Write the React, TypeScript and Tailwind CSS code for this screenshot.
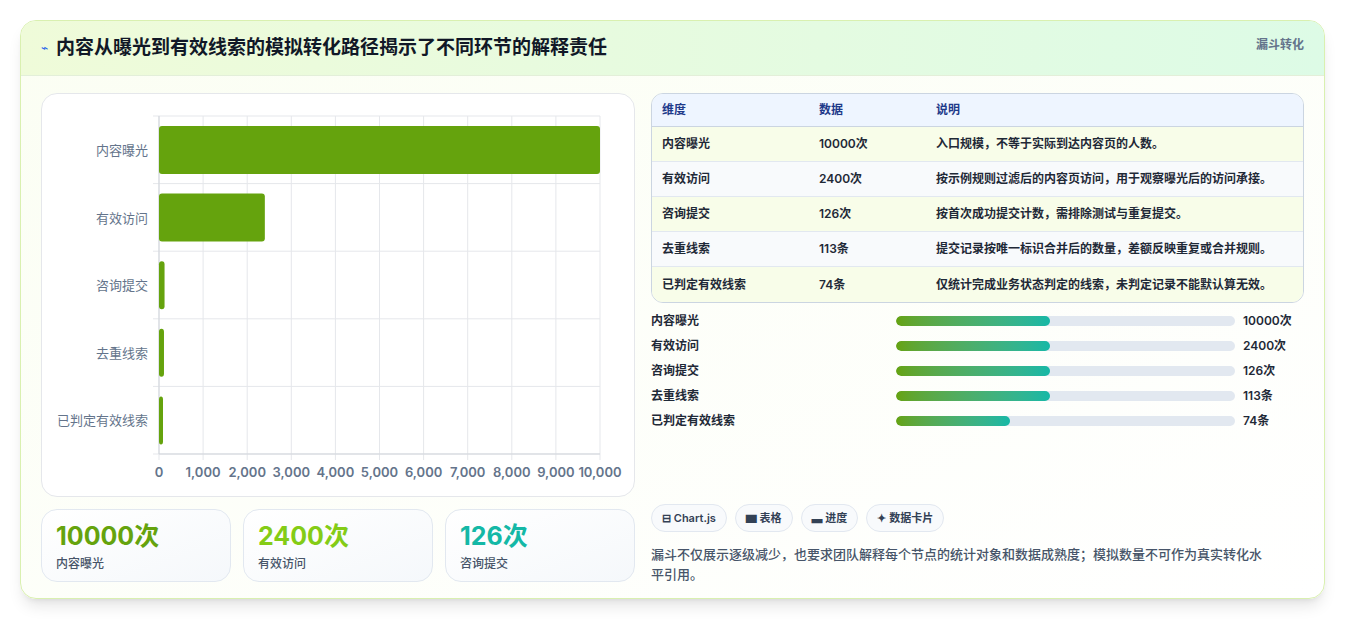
import React from "react";

const rows = [
  ["内容曝光", "10000次", "入口规模，不等于实际到达内容页的人数。", 10000],
  ["有效访问", "2400次", "按示例规则过滤后的内容页访问，用于观察曝光后的访问承接。", 2400],
  ["咨询提交", "126次", "按首次成功提交计数，需排除测试与重复提交。", 126],
  ["去重线索", "113条", "提交记录按唯一标识合并后的数量，差额反映重复或合并规则。", 113],
  ["已判定有效线索", "74条", "仅统计完成业务状态判定的线索，未判定记录不能默认算无效。", 74],
] as const;
const prog = [154, 154, 154, 154, 114];
const ticks = ["0", "1,000", "2,000", "3,000", "4,000", "5,000", "6,000", "7,000", "8,000", "9,000", "10,000"];

function Chart() {
  const x0 = 117, x1 = 558, top = 22, bottom = 360;
  const rh = (bottom - top) / 5;
  return (
    <svg width="593" height="403" className="block">
      {ticks.map((t, i) => {
        const x = x0 + ((x1 - x0) * i) / 10;
        return (
          <g key={i}>
            <line x1={x} x2={x} y1={top} y2={bottom + 6} stroke="#e5e7eb" />
            <text x={x} y={383} textAnchor="middle" fontSize="13" fill="#64748b" fontWeight="600">{t}</text>
          </g>
        );
      })}
      {[0, 1, 2, 3, 4, 5].map((i) => (
        <line key={i} x1={x0 - 6} x2={x1} y1={top + rh * i} y2={top + rh * i} stroke="#e5e7eb" />
      ))}
      <line x1={x0} x2={x0} y1={top} y2={bottom} stroke="#d1d5db" />
      <line x1={x0} x2={x1} y1={bottom} y2={bottom} stroke="#d1d5db" />
      {rows.map((r, i) => {
        const y = top + rh * i + 10;
        const w = Math.max(((x1 - x0) * (r[3] as number)) / 10000, 4);
        return (
          <g key={i}>
            <rect x={x0} y={y} width={w} height={48} rx="3" fill="#65a30d" />
            <text x={x0 - 11} y={y + 29} textAnchor="end" fontSize="13" fill="#64748b">{r[0]}</text>
          </g>
        );
      })}
    </svg>
  );
}

export default function App() {
  return (
    <div className="w-[1345px] h-[620px] bg-white p-5 pb-0" style={{ fontFamily: "Inter, 'Noto Sans CJK SC', sans-serif" }}>
      <div className="h-[579px] rounded-2xl border border-[#d9f0b0] overflow-hidden shadow-lg bg-gradient-to-br from-[#fbfef3] to-white">
        <div className="h-[55px] flex items-center justify-between px-5 border-b border-[#e3efd9] bg-gradient-to-r from-[#effbd9] to-[#ddfbe6]">
          <div className="flex items-center gap-2">
            <span className="text-[#2563eb] text-xs">⌁</span>
            <span className="text-[19px] font-bold text-[#111827]">内容从曝光到有效线索的模拟转化路径揭示了不同环节的解释责任</span>
          </div>
          <span className="text-xs font-bold text-[#64748b] self-start mt-4">漏斗转化</span>
        </div>
        <div className="flex gap-4 px-5 pt-[17px]">
          <div className="w-[594px] flex flex-col gap-3">
            <div className="h-[404px] rounded-2xl border border-[#e5e7eb] bg-white overflow-hidden"><Chart /></div>
            <div className="grid grid-cols-3 gap-3">
              {[["10000次", "内容曝光", "text-[#65a30d]"], ["2400次", "有效访问", "text-[#84cc16]"], ["126次", "咨询提交", "text-[#14b8a6]"]].map(([v, l, c]) => (
                <div key={l} className="h-[73px] rounded-2xl border border-[#e2e8f0] bg-gradient-to-br from-white to-[#f5f8fb] px-3.5 pt-2.5">
                  <div className={`text-[25px] font-bold leading-8 ${c}`}>{v}</div>
                  <div className="text-xs text-[#475569] mt-1 font-medium">{l}</div>
                </div>
              ))}
            </div>
          </div>
          <div className="flex-1 flex flex-col">
            <div className="rounded-xl border border-[#cbd5e1] overflow-hidden text-xs font-semibold">
              <div className="flex h-[33px] items-center bg-[#eef5ff] text-[#1e3a8a] border-b border-[#cbd5e1] px-2.5">
                <div className="w-[157px]">维度</div><div className="w-[117px]">数据</div><div>说明</div>
              </div>
              {rows.map((r, i) => (
                <div key={i} className={`flex h-[35px] items-center px-2.5 text-[#1f2937] ${i % 2 ? "bg-[#f8fafc]" : "bg-[#f8fde9]"} ${i < 4 ? "border-b border-[#e2e8f0]" : ""}`}>
                  <div className="w-[157px]">{r[0]}</div><div className="w-[117px]">{r[1]}</div><div>{r[2]}</div>
                </div>
              ))}
            </div>
            <div className="mt-3 flex flex-col gap-[13px] text-xs font-semibold text-[#1f2937]">
              {rows.map((r, i) => (
                <div key={i} className="flex items-center h-3">
                  <div className="w-[245px]">{r[0]}</div>
                  <div className="w-[339px] h-2.5 rounded-full bg-[#e2e8f0] overflow-hidden">
                    <div className="h-full rounded-full bg-gradient-to-r from-[#65a30d] to-[#14b8a6]" style={{ width: prog[i] }} />
                  </div>
                  <div className="ml-2">{r[1]}</div>
                </div>
              ))}
            </div>
            <div className="mt-[77px] flex gap-2 text-[11px] font-semibold text-[#334155]">
              {["⊟ Chart.js", "▆ 表格", "▃ 进度", "✦ 数据卡片"].map((c) => (
                <span key={c} className="h-7 px-2.5 flex items-center rounded-full border border-[#e2e8f0] bg-[#f8fafc]">{c}</span>
              ))}
            </div>
            <p className="mt-3 text-[13px] leading-[20px] text-[#475569] font-medium pr-10">漏斗不仅展示逐级减少，也要求团队解释每个节点的统计对象和数据成熟度；模拟数量不可作为真实转化水平引用。</p>
          </div>
        </div>
      </div>
    </div>
  );
}
